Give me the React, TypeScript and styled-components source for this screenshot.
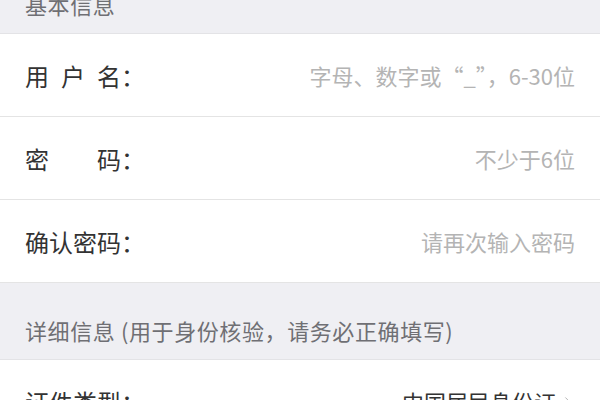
import React from 'react'
import styled, { createGlobalStyle } from 'styled-components'
import { ChevronRight } from 'lucide-react'

const GlobalStyle = createGlobalStyle`
  body {
    margin: 0;
    background: #ffffff;
    overflow: hidden;
    font-family: 'Noto Sans CJK SC', 'Noto Sans', sans-serif;
  }
`

type Field = {
  label: string[]
  placeholder?: string
  value?: string
}

const basicFields: Field[] = [
  { label: ['用', '户', '名'], placeholder: '字母、数字或“_”，6-30位' },
  { label: ['密', '码'], placeholder: '不少于6位' },
  { label: ['确', '认', '密', '码'], placeholder: '请再次输入密码' },
]

const detailFields: Field[] = [{ label: ['证', '件', '类', '型'], value: '中国居民身份证' }]

function FieldRow({ field }: { field: Field }) {
  return (
    <Row>
      <Label>
        <LabelChars>
          {field.label.map((c, i) => (
            <span key={i}>{c}</span>
          ))}
        </LabelChars>
        <Colon>：</Colon>
      </Label>
      {field.value ? (
        <Picker>
          {field.value}
          <ChevronRight size={15} strokeWidth={1.5} color='#b0b0b0' />
        </Picker>
      ) : (
        <Input type={field.label.includes('密') ? 'password' : 'text'} placeholder={field.placeholder} />
      )}
    </Row>
  )
}

function App() {
  return (
    <Page>
      <GlobalStyle />
      <SectionHeader>基本信息</SectionHeader>
      {basicFields.map((f, i) => (
        <FieldRow key={i} field={f} />
      ))}
      <SectionHeader>详细信息 (用于身份核验，请务必正确填写)</SectionHeader>
      {detailFields.map((f, i) => (
        <FieldRow key={i} field={f} />
      ))}
    </Page>
  )
}

export default App

const Page = styled.div`
  margin-top: -43px;
  display: flex;
  flex-direction: column;
`

const SectionHeader = styled.div`
  box-sizing: border-box;
  height: 77px;
  display: flex;
  align-items: flex-end;
  padding: 0 25px 13px;
  background: #efeff3;
  color: #6f6f74;
  font-size: 22px;
  line-height: 32px;
  letter-spacing: 0.6px;
  border-bottom: 1px solid #e3e3e6;
`

const Row = styled.div`
  box-sizing: border-box;
  height: 83px;
  display: flex;
  align-items: center;
  padding: 0 25px;
  background: #ffffff;
  border-bottom: 1px solid #e4e4e4;
`

const Label = styled.div`
  display: flex;
  align-items: center;
  flex: 0 0 auto;
  font-size: 24px;
  color: #333333;
`

const LabelChars = styled.div`
  display: flex;
  justify-content: space-between;
  width: 96px;
`

const Colon = styled.span`
  width: 20px;
`

const Input = styled.input`
  flex: 1;
  min-width: 0;
  border: none;
  outline: none;
  padding: 0;
  background: transparent;
  text-align: right;
  font-family: 'Noto Sans CJK SC', 'Noto Sans', sans-serif;
  font-size: 22px;
  color: #333333;
  &::placeholder {
    color: #b4b4b4;
    opacity: 1;
  }
`

const Picker = styled.div`
  flex: 1;
  display: flex;
  justify-content: flex-end;
  align-items: center;
  gap: 4px;
  font-size: 22px;
  color: #333333;
`
